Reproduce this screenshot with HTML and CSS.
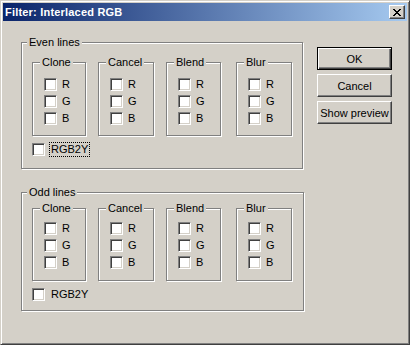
FILE: index.html
```html
<!DOCTYPE html>
<html lang="en">
<head>
  <meta charset="UTF-8">
  <title>Filter: Interlaced RGB</title>
  <link rel="stylesheet" href="styles.css">
</head>
<body>
  <div class="window">
    <div class="titlebar">
      <span class="title">Filter: Interlaced RGB</span>
      <button class="close-btn" title="Close">
        <svg width="8" height="7" viewBox="0 0 8 7" shape-rendering="crispEdges">
          <path fill="#000" d="M0 0h2v1h-2z M6 0h2v1h-2z M1 1h2v1h-2z M5 1h2v1h-2z M2 2h4v1h-4z M3 3h2v1h-2z M2 4h4v1h-4z M1 5h2v1h-2z M5 5h2v1h-2z M0 6h2v1h-2z M6 6h2v1h-2z"/>
        </svg>
      </button>
    </div>

    <div class="client">
      <div class="groups">
        <div class="group group-even">
          <div class="legend">Even lines</div>
          <div class="subgroups">
            <div class="sub sub-clone">
              <div class="legend">Clone</div>
              <div class="checks">
                <label class="check"><input type="checkbox"><span>R</span></label>
                <label class="check"><input type="checkbox"><span>G</span></label>
                <label class="check"><input type="checkbox"><span>B</span></label>
              </div>
            </div>
            <div class="sub sub-cancel">
              <div class="legend">Cancel</div>
              <div class="checks">
                <label class="check"><input type="checkbox"><span>R</span></label>
                <label class="check"><input type="checkbox"><span>G</span></label>
                <label class="check"><input type="checkbox"><span>B</span></label>
              </div>
            </div>
            <div class="sub sub-blend">
              <div class="legend">Blend</div>
              <div class="checks">
                <label class="check"><input type="checkbox"><span>R</span></label>
                <label class="check"><input type="checkbox"><span>G</span></label>
                <label class="check"><input type="checkbox"><span>B</span></label>
              </div>
            </div>
            <div class="sub sub-blur">
              <div class="legend">Blur</div>
              <div class="checks">
                <label class="check"><input type="checkbox"><span>R</span></label>
                <label class="check"><input type="checkbox"><span>G</span></label>
                <label class="check"><input type="checkbox"><span>B</span></label>
              </div>
            </div>
          </div>
          <label class="check check-wide"><input type="checkbox"><span class="focus">RGB2Y</span></label>
        </div>

        <div class="group group-odd">
          <div class="legend">Odd lines</div>
          <div class="subgroups">
            <div class="sub sub-clone">
              <div class="legend">Clone</div>
              <div class="checks">
                <label class="check"><input type="checkbox"><span>R</span></label>
                <label class="check"><input type="checkbox"><span>G</span></label>
                <label class="check"><input type="checkbox"><span>B</span></label>
              </div>
            </div>
            <div class="sub sub-cancel">
              <div class="legend">Cancel</div>
              <div class="checks">
                <label class="check"><input type="checkbox"><span>R</span></label>
                <label class="check"><input type="checkbox"><span>G</span></label>
                <label class="check"><input type="checkbox"><span>B</span></label>
              </div>
            </div>
            <div class="sub sub-blend">
              <div class="legend">Blend</div>
              <div class="checks">
                <label class="check"><input type="checkbox"><span>R</span></label>
                <label class="check"><input type="checkbox"><span>G</span></label>
                <label class="check"><input type="checkbox"><span>B</span></label>
              </div>
            </div>
            <div class="sub sub-blur">
              <div class="legend">Blur</div>
              <div class="checks">
                <label class="check"><input type="checkbox"><span>R</span></label>
                <label class="check"><input type="checkbox"><span>G</span></label>
                <label class="check"><input type="checkbox"><span>B</span></label>
              </div>
            </div>
          </div>
          <label class="check check-wide"><input type="checkbox"><span>RGB2Y</span></label>
        </div>
      </div>

      <div class="buttons">
        <button class="btn btn-default">OK</button>
        <button class="btn">Cancel</button>
        <button class="btn">Show preview</button>
      </div>
    </div>
  </div>
</body>
</html>
```

FILE: styles.css
```css
* { margin: 0; padding: 0; box-sizing: border-box; }
html, body {
  background: #d4d0c8;
  font-family: "Liberation Sans", Arial, sans-serif;
  font-size: 11px;
  color: #000;
}
.window {
  width: 410px;
  height: 345px;
  background: #d4d0c8;
  border: 1px solid;
  border-color: #d4d0c8 #404040 #404040 #d4d0c8;
  box-shadow: inset 1px 1px #fff, inset -1px -1px #808080;
  padding: 2px;
}
.titlebar {
  height: 18px;
  margin-bottom: 1px;
  padding: 0 2px;
  display: flex;
  align-items: center;
  justify-content: space-between;
  background: linear-gradient(to right, #0a246a, #a6caf0);
}
.title {
  color: #fff;
  font-weight: bold;
  font-size: 11px;
  letter-spacing: 0.2px;
}
.close-btn {
  width: 16px;
  height: 14px;
  display: flex;
  align-items: center;
  justify-content: center;
  background: #d4d0c8;
  border: 1px solid;
  border-color: #fff #404040 #404040 #fff;
  box-shadow: inset -1px -1px #808080;
}
.client {
  display: flex;
  align-items: flex-start;
  padding: 20px 0 0 18px;
}
.groups {
  width: 283px;
}
.group, .sub {
  border: 1px solid #808080;
  box-shadow: inset 1px 1px #fff, 1px 1px #fff;
}
.group {
  padding: 0 0 0 10px;
}
.group-even { width: 282px; padding-bottom: 11px; }
.group-odd { width: 283px; margin-top: 23px; padding-bottom: 8px; }
.legend {
  width: max-content;
  margin: -7px 0 0 -5px;
  padding: 0 2px;
  line-height: 13px;
  background: #d4d0c8;
}
.subgroups {
  display: flex;
  margin-top: 13px;
}
.group-odd .subgroups { margin-top: 9px; }
.sub {
  width: 54px;
  margin-right: 12px;
  padding: 0 0 10px 11px;
}
.sub .legend { margin-left: -4px; }
.sub-cancel { width: 56px; }
.sub-blend { width: 55px; margin-right: 15px; }
.sub-blur { width: 56px; margin-right: 0; }
.group-odd .sub { padding-bottom: 11px; }
.checks {
  display: flex;
  flex-direction: column;
  gap: 4px;
  margin-top: 9px;
}
.group-odd .checks { margin-top: 7px; }
.check {
  display: flex;
  align-items: center;
  line-height: 13px;
}
.check input {
  appearance: none;
  -webkit-appearance: none;
  width: 13px;
  height: 13px;
  margin: 0;
  background: #fff;
  border: 1px solid;
  border-color: #808080 #fff #fff #808080;
  box-shadow: inset 1px 1px #404040, inset -1px -1px #d4d0c8;
}
.check span {
  margin-left: 5px;
}
.check-wide {
  margin-top: 6px;
}
.check-wide span {
  margin-left: 4px;
  padding: 0 1px;
  border: 1px solid transparent;
}
.check-wide .focus {
  border: 1px dotted #000;
}
.buttons {
  display: flex;
  flex-direction: column;
  gap: 4px;
  margin: 5px 0 0 13px;
}
.btn {
  width: 75px;
  height: 23px;
  font-family: inherit;
  font-size: 11px;
  color: #000;
  background: #d4d0c8;
  border: 1px solid;
  border-color: #fff #404040 #404040 #fff;
  box-shadow: inset -1px -1px #808080;
}
.btn-default {
  border-color: #000;
  box-shadow: inset 1px 1px #fff, inset -1px -1px #404040, inset -2px -2px #808080;
}
```
